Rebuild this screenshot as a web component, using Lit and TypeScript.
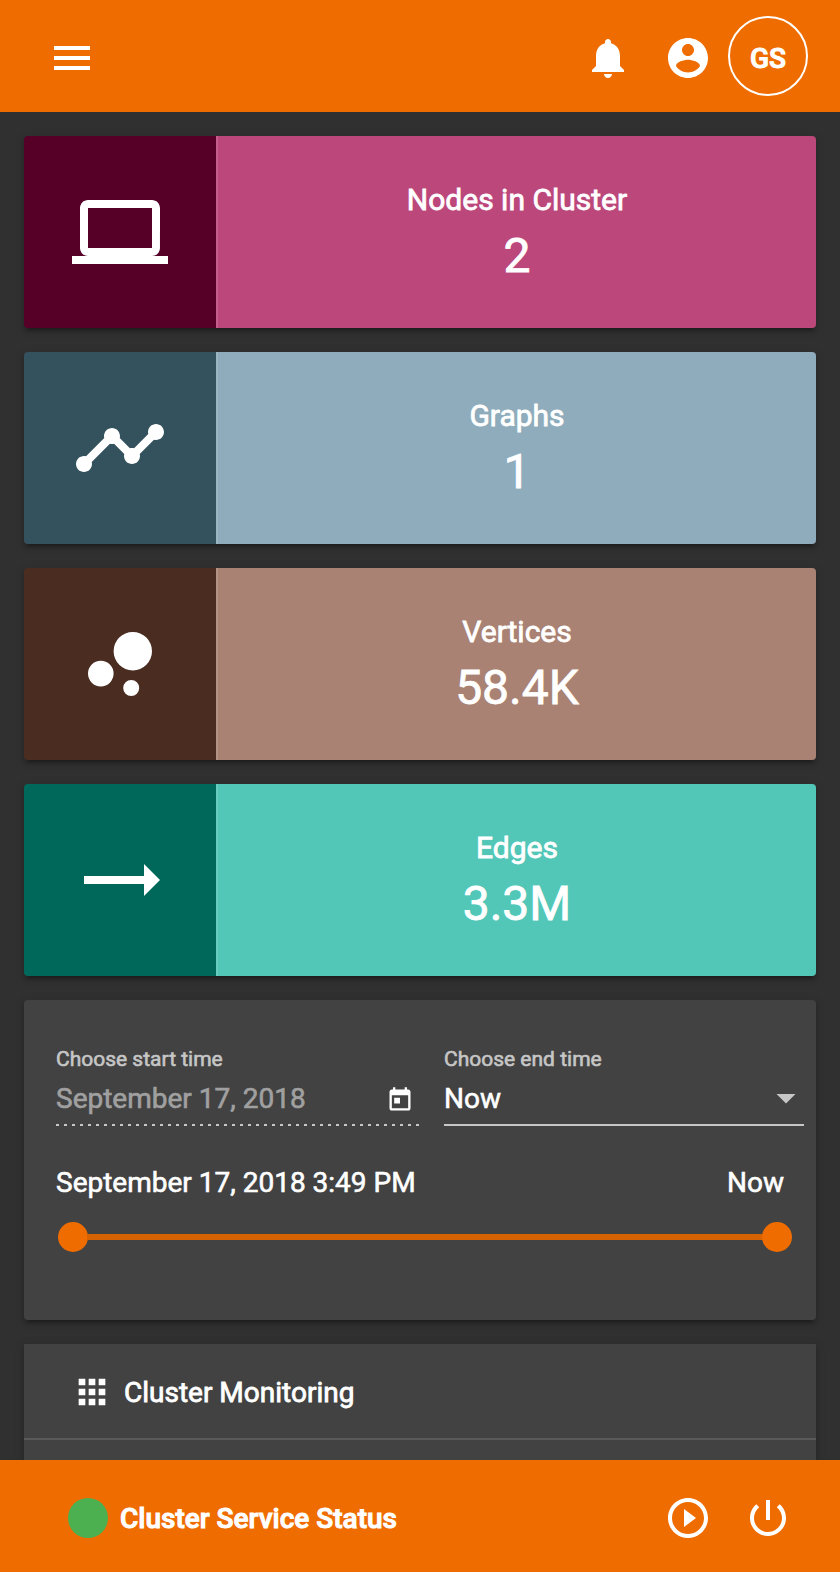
import { LitElement, html, css, svg } from "lit";
import { customElement, property } from "lit/decorators.js";

const ICONS: Record<string, string> = {
  menu: "M3 18h18v-2H3v2zm0-5h18v-2H3v2zm0-7v2h18V6H3z",
  bell: "M12 22c1.1 0 2-.9 2-2h-4c0 1.1.89 2 2 2zm6-6v-5c0-3.07-1.64-5.64-4.5-6.32V4c0-.83-.67-1.5-1.5-1.5s-1.5.67-1.5 1.5v.68C7.63 5.36 6 7.92 6 11v5l-2 2v1h16v-1l-2-2z",
  account: "M12 2C6.48 2 2 6.48 2 12s4.48 10 10 10 10-4.48 10-10S17.52 2 12 2zm0 3c1.66 0 3 1.34 3 3s-1.34 3-3 3-3-1.34-3-3 1.34-3 3-3zm0 14.2c-2.5 0-4.71-1.28-6-3.22.03-1.99 4-3.08 6-3.08 1.99 0 5.97 1.09 6 3.08-1.29 1.94-3.5 3.22-6 3.22z",
  laptop: "M20 18c1.1 0 1.99-.9 1.99-2L22 6c0-1.1-.9-2-2-2H4c-1.1 0-2 .9-2 2v10c0 1.1.9 2 2 2H0v2h24v-2h-4zM4 6h16v10H4V6z",
  timeline: "M23 8c0 1.1-.9 2-2 2-.18 0-.35-.02-.51-.07l-3.56 3.55c.05.16.07.34.07.52 0 1.1-.9 2-2 2s-2-.9-2-2c0-.18.02-.36.07-.52l-2.55-2.55c-.16.05-.34.07-.52.07s-.36-.02-.52-.07l-4.55 4.56c.05.16.07.33.07.51 0 1.1-.9 2-2 2s-2-.9-2-2 .9-2 2-2c.18 0 .35.02.51.07l4.56-4.55C8.02 9.36 8 9.18 8 9c0-1.1.9-2 2-2s2 .9 2 2c0 .18-.02.36-.07.52l2.55 2.55c.16-.05.34-.07.52-.07s.36.02.52.07l3.55-3.56C19.02 8.35 19 8.18 19 8c0-1.1.9-2 2-2s2 .9 2 2z",
  bubbles: "M7.2 11.2a3.2 3.2 0 1 0 0 6.4a3.2 3.2 0 1 0 0-6.4zM14.8 16a2 2 0 1 0 0 4a2 2 0 1 0 0-4zM15.2 4a4.8 4.8 0 1 0 0 9.6a4.8 4.8 0 1 0 0-9.6z",
  arrow: "M22 12l-4-4v3H3v2h15v3z",
  today: "M19 3h-1V1h-2v2H8V1H6v2H5c-1.11 0-1.99.9-1.99 2L3 19c0 1.1.89 2 2 2h14c1.1 0 2-.9 2-2V5c0-1.1-.9-2-2-2zm0 16H5V8h14v11zM7 10h5v5H7z",
  apps: "M4 8h4V4H4v4zm6 12h4v-4h-4v4zm-6 0h4v-4H4v4zm0-6h4v-4H4v4zm6 0h4v-4h-4v4zm6-10v4h4V4h-4zm-6 4h4V4h-4v4zm6 6h4v-4h-4v4zm0 6h4v-4h-4v4z",
  play: "M10 16.5l6-4.5-6-4.5v9zM12 2C6.48 2 2 6.48 2 12s4.48 10 10 10 10-4.48 10-10S17.52 2 12 2zm0 18c-4.41 0-8-3.59-8-8s3.59-8 8-8 8 3.59 8 8-3.59 8-8 8z",
  power: "M13 3h-2v10h2V3zm4.83 2.17l-1.42 1.42C17.99 7.86 19 9.81 19 12c0 3.87-3.13 7-7 7s-7-3.13-7-7c0-2.19 1.01-4.14 2.58-5.42L6.17 5.17C4.23 6.82 3 9.26 3 12c0 4.97 4.03 9 9 9s9-4.03 9-9c0-2.74-1.23-5.18-3.17-6.83z",
};

@customElement("md-icon")
export class MdIcon extends LitElement {
  @property() name = "menu";
  static styles = css`
    :host { display: block; width: 48px; height: 48px; flex: none; }
    .glyph { display: block; width: 100%; height: 100%; fill: currentColor; }
  `;
  render() {
    return html`<svg class="glyph" viewBox="0 0 24 24" aria-hidden="true">${svg`<path d=${ICONS[this.name]}></path>`}</svg>`;
  }
}

@customElement("stat-card")
export class StatCard extends LitElement {
  @property() icon = "";
  @property() label = "";
  @property() value = "";
  @property() tone = "";
  static styles = css`
    :host { display: block; }
    .card {
      display: flex; height: 192px; border-radius: 4px; overflow: hidden;
      box-shadow: 0 6px 2px -4px rgba(0,0,0,.2), 0 4px 4px 0 rgba(0,0,0,.14), 0 2px 10px 0 rgba(0,0,0,.12);
    }
    .side { width: 192px; flex: none; display: flex; align-items: center; justify-content: center; }
    .icon { width: 96px; height: 96px; }
    .body {
      flex: 1; box-sizing: border-box; padding-top: 46px; text-align: center;
      border-left: 2px solid rgba(255,255,255,.12); background-clip: border-box;
    }
    .label { font-size: 30px; line-height: 36px; -webkit-text-stroke: 0.8px currentColor; }
    .value { font-size: 48px; line-height: 56px; margin-top: 10px; -webkit-text-stroke: 0.8px currentColor; }
    .pink .side { background: #560027; }
    .pink .body { background-color: #bc477b; }
    .slate .side { background: #34515e; }
    .slate .body { background-color: #8eacbb; }
    .brown .side { background: #4b2c20; }
    .brown .body { background-color: #a98274; }
    .teal .side { background: #00675b; }
    .teal .body { background-color: #52c7b8; }
  `;
  render() {
    return html`<section class="card ${this.tone}">
      <div class="side"><md-icon class="icon" name=${this.icon}></md-icon></div>
      <div class="body">
        <div class="label">${this.label}</div>
        <div class="value">${this.value}</div>
      </div>
    </section>`;
  }
}

const STATS = [
  { icon: "laptop", label: "Nodes in Cluster", value: "2", tone: "pink" },
  { icon: "timeline", label: "Graphs", value: "1", tone: "slate" },
  { icon: "bubbles", label: "Vertices", value: "58.4K", tone: "brown" },
  { icon: "arrow", label: "Edges", value: "3.3M", tone: "teal" },
];

@customElement("app-root")
export class AppRoot extends LitElement {
  static styles = css`
    :host {
      display: flex; flex-direction: column; height: 1572px; overflow: hidden;
      background: #303030; color: #fff; font-family: Roboto, sans-serif; font-size: 28px;
      -webkit-text-stroke: 0.6px currentColor;
    }
    .top {
      height: 112px; flex: none; box-sizing: border-box; background: #ef6c00;
      display: flex; align-items: center; padding: 4px 32px 0 48px;
    }
    .spacer { flex: 1; }
    .top .account { margin: 0 16px 0 32px; }
    .avatar {
      width: 80px; height: 80px; box-sizing: border-box; border: 2px solid #fff; border-radius: 50%;
      display: flex; align-items: center; justify-content: center;
      margin-bottom: 4px; padding-top: 5px; font-weight: 500; line-height: 32px;
      -webkit-text-stroke-width: 1px;
    }
    .main { flex: 1; min-height: 0; overflow: hidden; padding: 24px; display: flex; flex-direction: column; gap: 24px; }
    .panel {
      flex: none; box-sizing: border-box; background: #424242; border-radius: 4px;
      box-shadow: 0 6px 2px -4px rgba(0,0,0,.2), 0 4px 4px 0 rgba(0,0,0,.14), 0 2px 10px 0 rgba(0,0,0,.12);
    }
    .time { height: 320px; padding: 46px 12px 0 32px; }
    .fields { display: grid; grid-template-columns: 363px 360px; gap: 25px; }
    .field-label { font-size: 21px; line-height: 26px; color: #c6c6c6; }
    .field-row { display: flex; align-items: center; height: 36px; margin-top: 8px; padding-bottom: 8px; border-bottom: 2px solid #c6c6c6; }
    .field-row.disabled { border-bottom: none; padding-bottom: 10px; color: #a0a0a0;
      background: repeating-linear-gradient(to right, #c6c6c6 0 3px, transparent 3px 8px) left bottom / 100% 2px no-repeat; }
    .today { width: 28px; height: 28px; color: #fff; margin-right: 5px; margin-top: 4px; }
    .caret { width: 20px; height: 10px; margin: 1px 8px 0 0; background: #c6c6c6; clip-path: polygon(0 0, 100% 0, 50% 100%); }
    .range { display: flex; justify-content: space-between; margin-top: 39px; padding-right: 20px; line-height: 36px; }
    .slider { display: flex; align-items: center; margin: 21px 12px 0 2px; height: 30px; }
    .thumb { width: 30px; height: 30px; border-radius: 50%; background: #ef6c00; flex: none; }
    .track { flex: 1; height: 6px; margin: 0 -1px; background: #d66300; }
    .monitor { height: 400px; border-radius: 0; }
    .monitor-head { display: flex; align-items: center; height: 94px; border-bottom: 2px solid rgba(255,255,255,.12); padding-left: 48px; }
    .monitor-title { padding-top: 2px; -webkit-text-stroke-width: 0.8px; }
    .apps { width: 40px; height: 40px; margin: 2px 12px 0 0; }
    .bottom { height: 112px; flex: none; box-sizing: border-box; background: #ef6c00; display: flex; align-items: center; padding: 4px 48px 0 68px; }
    .dot { width: 40px; height: 40px; border-radius: 50%; background: #4caf50; margin-right: 12px; }
    .status { font-weight: 500; line-height: 36px; padding-top: 1px; -webkit-text-stroke-width: 1px; }
    .bottom .power { margin-left: 32px; }
  `;
  render() {
    return html`
      <header class="top">
        <md-icon name="menu"></md-icon>
        <span class="spacer"></span>
        <md-icon name="bell"></md-icon>
        <md-icon class="account" name="account"></md-icon>
        <div class="avatar">GS</div>
      </header>
      <main class="main">
        ${STATS.map((s) => html`<stat-card icon=${s.icon} label=${s.label} value=${s.value} tone=${s.tone}></stat-card>`)}
        <section class="panel time">
          <div class="fields">
            <div>
              <div class="field-label">Choose start time</div>
              <div class="field-row disabled"><span>September 17, 2018</span><span class="spacer"></span><md-icon class="today" name="today"></md-icon></div>
            </div>
            <div>
              <div class="field-label">Choose end time</div>
              <div class="field-row"><span>Now</span><span class="spacer"></span><span class="caret"></span></div>
            </div>
          </div>
          <div class="range"><span>September 17, 2018 3:49 PM</span><span>Now</span></div>
          <div class="slider"><span class="thumb"></span><span class="track"></span><span class="thumb"></span></div>
        </section>
        <section class="panel monitor">
          <div class="monitor-head"><md-icon class="apps" name="apps"></md-icon><span class="monitor-title">Cluster Monitoring</span></div>
        </section>
      </main>
      <footer class="bottom">
        <span class="dot"></span>
        <span class="status">Cluster Service Status</span>
        <span class="spacer"></span>
        <md-icon name="play"></md-icon>
        <md-icon class="power" name="power"></md-icon>
      </footer>
    `;
  }
}
